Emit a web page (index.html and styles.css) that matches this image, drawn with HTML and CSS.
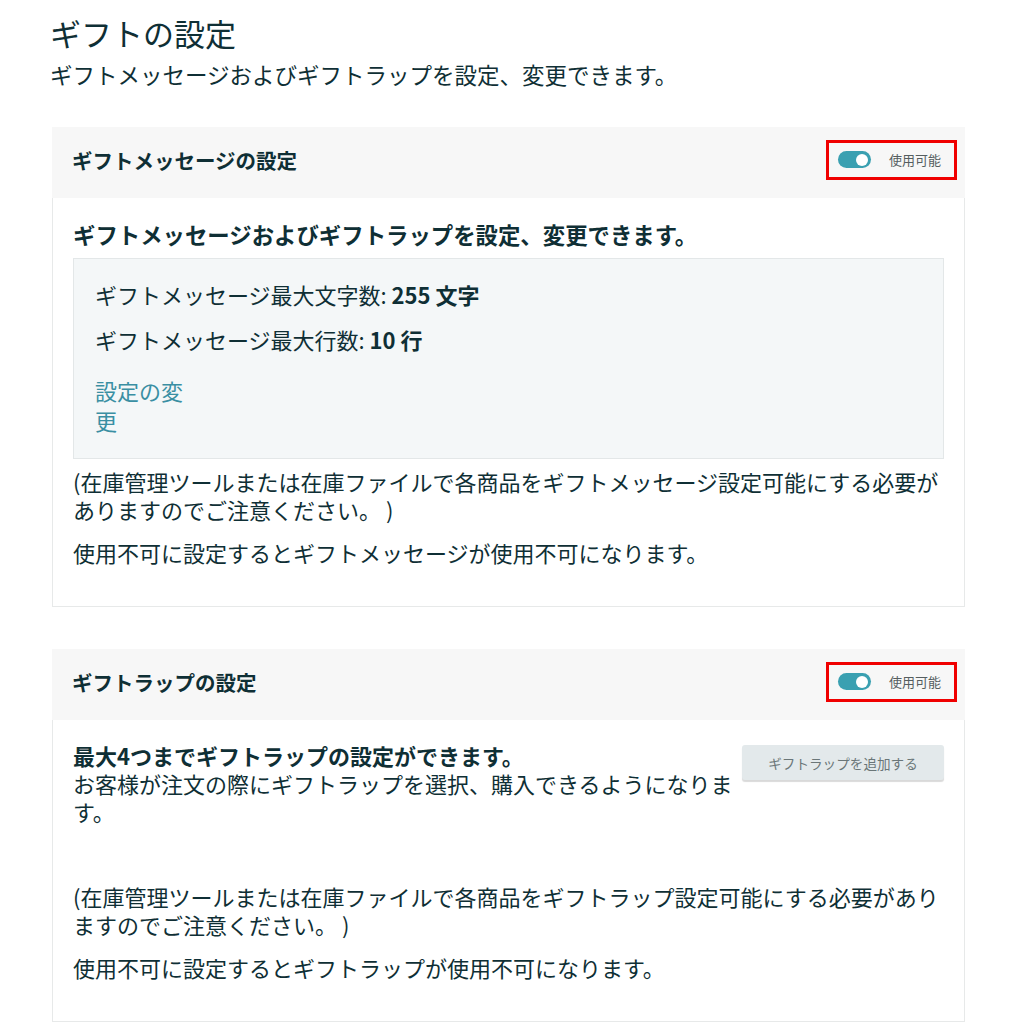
FILE: index.html
```html
<!DOCTYPE html>
<html lang="ja">
<head>
    <meta charset="UTF-8">
    <meta name="viewport" content="width=device-width, initial-scale=1.0">
    <title>ギフトの設定</title>
    <link rel="stylesheet" href="styles.css">
</head>

<body>

    <div class="page">
        <h1 class="page-title">ギフトの設定</h1>
        <p class="page-lead">ギフトメッセージおよびギフトラップを設定、変更できます。</p>

        <div class="card">
            <div class="card-header">
                <h2>ギフトメッセージの設定</h2>
                <div class="toggle-box">
                    <span class="toggle"><span class="knob"></span></span>
                    <span class="toggle-label">使用可能</span>
                </div>
            </div>
            <div class="card-body">
                <p class="body-title">ギフトメッセージおよびギフトラップを設定、変更できます。</p>

                <div class="info-box">
                    <p>ギフトメッセージ最大文字数: <b>255 文字</b></p>
                    <p>ギフトメッセージ最大行数: <b>10 行</b></p>
                    <div class="link-cell">
                        <a href="#" class="link">設定の変更</a>
                    </div>
                </div>

                <p class="note">(在庫管理ツールまたは在庫ファイルで各商品をギフトメッセージ設定可能にする必要がありますのでご注意ください。 )</p>
                <p class="note">使用不可に設定するとギフトメッセージが使用不可になります。</p>
            </div>
        </div>

        <div class="card">
            <div class="card-header">
                <h2>ギフトラップの設定</h2>
                <div class="toggle-box">
                    <span class="toggle"><span class="knob"></span></span>
                    <span class="toggle-label">使用可能</span>
                </div>
            </div>
            <div class="card-body">
                <div class="wrap-row">
                    <div class="wrap-text">
                        <div class="wrap-title">最大4つまでギフトラップの設定ができます。</div>
                        <div>お客様が注文の際にギフトラップを選択、購入できるようになります。</div>
                    </div>
                    <button class="add-btn" type="button">ギフトラップを追加する</button>
                </div>

                <p class="note note-spaced">(在庫管理ツールまたは在庫ファイルで各商品をギフトラップ設定可能にする必要がありますのでご注意ください。 )</p>
                <p class="note">使用不可に設定するとギフトラップが使用不可になります。</p>
            </div>
        </div>
    </div>

</body>
</html>
```

FILE: styles.css
```css
* {
    margin: 0;
    padding: 0;
    box-sizing: border-box;
    font-family: 'Noto Sans CJK JP', 'Noto Sans', sans-serif;
}

body {
    background-color: #fff;
    color: #0f2f35;
}

.page {
    padding: 12px 52px 0 52px;
}

.page-title {
    font-size: 31px;
    font-weight: 400;
    line-height: 42px;
    margin-left: -2px;
}

.page-lead {
    font-size: 22.5px;
    line-height: 30px;
    margin-top: 5px;
    margin-left: -2px;
    margin-bottom: 38px;
}

.card {
    margin-bottom: 42px;
}

.card-header {
    display: flex;
    align-items: center;
    justify-content: space-between;
    height: 71px;
    padding: 0 8px 6px 20px;
    background: #f7f7f7;
}

.card-header h2 {
    font-size: 20.5px;
    font-weight: 700;
}

.toggle-box {
    display: flex;
    align-items: center;
    gap: 18px;
    width: 131px;
    height: 40px;
    padding: 0 10px 0 9px;
    border: 3px solid #f00000;
}

.toggle {
    position: relative;
    width: 33px;
    height: 17px;
    border-radius: 9px;
    background: #3aa0b1;
}

.knob {
    position: absolute;
    top: 2.5px;
    right: 3px;
    width: 12px;
    height: 12px;
    border-radius: 50%;
    background: #fff;
}

.toggle-label {
    font-size: 13px;
    color: #555e60;
}

.card-body {
    padding: 22px 20px 40px 20px;
    border: 1px solid #e7e9e9;
    border-top: none;
    font-size: 22px;
    line-height: 28px;
}

.body-title {
    font-size: 22.4px;
    font-weight: 700;
    margin-bottom: 10px;
}

.info-box {
    padding: 21px 21px 23px 21px;
    background: #f4f7f8;
    border: 1px solid #e3e7e8;
}

.info-box p {
    margin-bottom: 17px;
}

.info-box b {
    font-weight: 700;
}

.link-cell {
    width: 100px;
    line-height: 30px;
    padding-top: 5px;
}

.link {
    color: #3a8fa3;
    text-decoration: none;
}

.note {
    margin-top: 8px;
}

.note + .note {
    margin-top: 15px;
}

.wrap-row {
    display: flex;
    align-items: flex-start;
    gap: 4px;
}

.wrap-text {
    flex: 1;
}

.wrap-title {
    font-weight: 700;
    line-height: 27px;
}

.add-btn {
    width: 202px;
    height: 35px;
    margin-top: 3px;
    font-size: 13.6px;
    color: #6a7678;
    background: #e3e9eb;
    border: none;
    border-radius: 3px;
    box-shadow: 0 2px 1px rgba(0, 0, 0, 0.15);
}

.note-spaced {
    margin-top: 57px;
}
```
